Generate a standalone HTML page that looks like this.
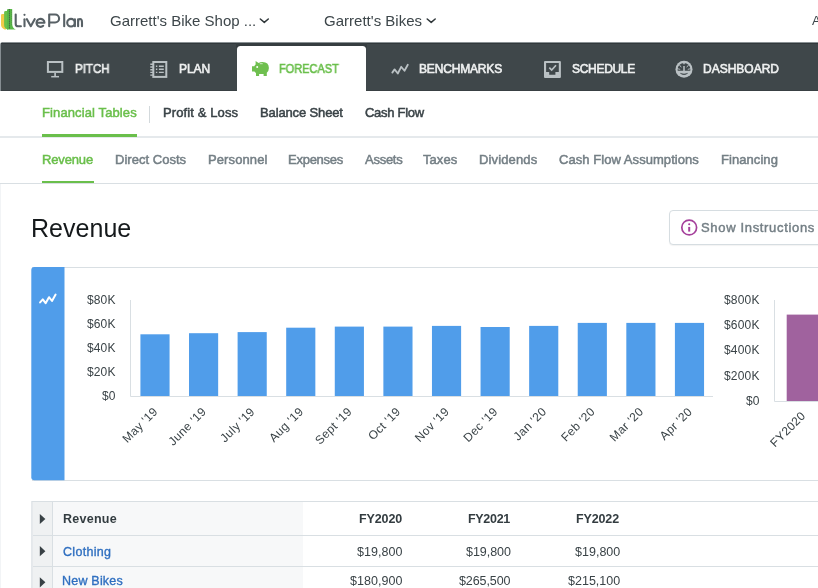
<!DOCTYPE html>
<html><head><meta charset="utf-8"><title>LivePlan - Revenue</title>
<style>
html,body{margin:0;padding:0;background:#fff;}
body{width:818px;height:588px;overflow:hidden;position:relative;font-family:"Liberation Sans",sans-serif;}
.t{position:absolute;white-space:pre;font-family:"Liberation Sans",sans-serif;will-change:transform;}
.a{position:absolute;}
svg{position:absolute;left:0;top:0;overflow:visible;}
</style></head><body>

<div class="a" style="left:0;top:42px;width:818px;height:49px;background:#868e92;border-top-left-radius:3px;overflow:hidden;"><div class="a" style="left:1px;top:0;width:817px;height:49px;background:#3f474a;border-top-left-radius:3px;"></div><div class="a" style="left:2px;top:0;width:816px;height:1px;background:#8a9194;"></div><div class="a" style="left:1px;top:1px;width:817px;height:1px;background:#31383b;"></div><div class="a" style="left:1px;top:48px;width:817px;height:1px;background:#394043;"></div><div class="a" style="left:236px;top:1px;width:131px;height:5px;background:#363d40;"></div><div class="a" style="left:236.5px;top:4.4px;width:129.5px;height:50px;background:#fff;border-radius:3.5px 3.5px 0 0;transform:translateZ(0);"></div></div>
<div class="a" style="left:0;top:136px;width:818px;height:2px;background:#e5e9ec;"></div>
<div class="a" style="left:0;top:183px;width:818px;height:1px;background:#d9dfe3;"></div>
<div class="a" style="left:42px;top:134px;width:95px;height:3px;background:#6abf4b;"></div>
<div class="a" style="left:42px;top:181px;width:52px;height:2px;background:#6abf4b;"></div>
<div class="a" style="left:149px;top:106px;width:1px;height:17px;background:#d3d9dc;"></div>
<div class="a" style="left:0;top:184px;width:1px;height:404px;background:#f2f4f6;"></div>
<div class="a" style="left:669px;top:210px;width:160px;height:33px;border:1px solid #d6dde1;border-radius:4px;box-shadow:0 1px 1px rgba(0,0,0,.05);background:#fff;"></div>
<div class="a" style="left:32px;top:267px;width:800px;height:212px;border-top:1px solid #d9dfe3;border-bottom:1px solid #d9dfe3;"></div>
<div class="a" style="left:32px;top:501px;width:800px;height:100px;border-top:1px solid #d9dfe3;"></div>
<div class="a" style="left:32px;top:502px;width:21px;height:90px;background:#eff1f2;"></div>
<div class="a" style="left:53px;top:502px;width:250px;height:90px;background:#f7f8f9;"></div>
<div class="a" style="left:52px;top:502px;width:1px;height:90px;background:#d9dfe3;"></div>
<div class="a" style="left:33px;top:535px;width:800px;height:1px;background:#d9dfe3;"></div>
<div class="a" style="left:33px;top:566px;width:800px;height:1px;background:#d9dfe3;"></div>
<svg width="818" height="588" viewBox="0 0 818 588">
<path d="M1 15.2 Q1 13.9 2.3 13.9 H6 V29.5 H4.5 Q1 27.5 1 25 Z" fill="#f2cb4a"/>
<path d="M4.1 12.4 Q4.1 11.1 5.4 11.1 H8 V29.5 H7.5 Q4.1 28 4.1 25 Z" fill="#6cc04a"/>
<path d="M7 10.2 Q7 9.1 8.2 9.1 H12.2 V24 Q12.4 28.3 15.8 29.5 H7 Z" fill="#58b947"/>
<g fill="#3b4240"><circle cx="9.5" cy="9.8" r="0.6"/><circle cx="9.5" cy="11.8" r="0.6"/><circle cx="9.5" cy="13.8" r="0.6"/><circle cx="9.5" cy="15.8" r="0.6"/><circle cx="9.5" cy="17.8" r="0.6"/><circle cx="9.5" cy="19.8" r="0.6"/><circle cx="9.5" cy="21.8" r="0.6"/><circle cx="9.5" cy="23.8" r="0.6"/><circle cx="9.5" cy="25.8" r="0.6"/><circle cx="9.5" cy="27.8" r="0.6"/></g>
<g fill="#55704d"><circle cx="11.5" cy="10.8" r="0.45"/><circle cx="11.5" cy="12.8" r="0.45"/><circle cx="11.5" cy="14.8" r="0.45"/><circle cx="11.5" cy="16.8" r="0.45"/><circle cx="11.5" cy="18.8" r="0.45"/><circle cx="11.5" cy="20.8" r="0.45"/><circle cx="11.5" cy="22.8" r="0.45"/><circle cx="11.5" cy="24.8" r="0.45"/></g>
<g fill="none" stroke="#586166" stroke-width="2.1" stroke-linecap="round" stroke-linejoin="round"><path d="M15.7 14.5 V23.9 Q15.7 26.3 18.1 26.3 H20.9"/><path d="M24.5 19.2 V26.3"/><path d="M26.9 19.2 L30.8 26.2 L34.7 19.2"/><path d="M36.5 22.8 H44.5 A4 4 0 1 0 43.2 25.8"/><path d="M49.2 26.3 V14.5 H55.1 A4 4 0 0 1 55.1 22.5 H49.2"/><path d="M64.2 14.5 V26.3"/><circle cx="71" cy="22.7" r="3.8"/><path d="M74.9 19.2 V26.3"/><path d="M78.1 19.2 V26.3 M78.1 22.4 C78.1 17.8 82 17.8 82 22.4 V26.3"/></g><circle cx="24.5" cy="14.8" r="1.1" fill="#586166"/>
<g fill="none" stroke="#30373a" stroke-width="1.5" stroke-linecap="round" stroke-linejoin="round"><path d="M260.3 19 L264.3 22.4 L268.3 19"/><path d="M427.2 19 L431.2 22.4 L435.2 19"/></g>
<g fill="none" stroke="#bac1c4"><rect x="47.9" y="62" width="14.4" height="9.9" stroke-width="2"/><path d="M55.1 73 V76" stroke-width="1.7"/><path d="M51.2 76.7 H59" stroke-width="1.5"/></g>
<g fill="none" stroke="#bac1c4"><rect x="153.3" y="62" width="13" height="14.9" stroke-width="2"/><path d="M150.3 64.3 H153 M150.3 67 H153 M150.3 69.7 H153 M150.3 72.4 H153 M150.3 75.1 H153" stroke-width="1.4"/><path d="M155.9 66.2 H157.3 M158.9 66.2 H163.8 M155.9 69.3 H157.3 M158.9 69.3 H163.8 M155.9 72.4 H157.3 M158.9 72.4 H163.8" stroke-width="1.4"/></g>
<g fill="#6fbf4f"><path d="M255.6 61 L258.6 63.1 Q260 62.1 262.5 62.1 Q268.9 62.3 268.9 68 Q268.9 71 266.8 72.8 V76 H263.6 V74.1 H259.1 V76 H256 V72.9 Q254.9 72.2 254.5 71.6 H252 V66.3 H254.3 Q254.8 65.2 255.6 64.5 Z"/></g><circle cx="257.2" cy="67.1" r="1" fill="#fff"/><path d="M259.8 63.7 H262.7" stroke="#cfeac3" stroke-width="1" fill="none"/>
<path d="M392.3 72.6 L394.6 69.4 L397.8 73.5 L401.2 66.8 L404.5 70.8 L407.8 64.7" fill="none" stroke="#bac1c4" stroke-width="1.8" stroke-linejoin="round" stroke-linecap="round"/>
<rect x="544" y="61" width="16.9" height="16.9" rx="1" fill="#bac1c4"/><path d="M546.1 63.1 H558.8 V71.9 H555.4 V74.8 H549.2 V71.9 H546.1 Z" fill="#3f474a"/><path d="M549.3 67.6 L551.7 70 L556 65.3" fill="none" stroke="#bac1c4" stroke-width="1.7"/>
<circle cx="684" cy="69.3" r="8.5" fill="#bac1c4"/><path d="M677.7 70.8 V69.3 A6.3 6.4 0 0 1 690.3 69.3 V70.8 Z" fill="#3f474a"/><path d="M684 62.5 V64.2 M684 66 V71.2" stroke="#bac1c4" stroke-width="1.5" fill="none"/><path d="M679 64.4 L681.3 67.3 M689 64.4 L686.7 67.3 M677.2 68.6 L680.2 69.4 M690.8 68.6 L687.8 69.4" stroke="#bac1c4" stroke-width="0.9" fill="none"/><path d="M680.4 73.4 Q684 75.9 687.6 73.4 Q684 74.4 680.4 73.4 Z" fill="#3f474a" stroke="#3f474a" stroke-width="0.5"/>
<circle cx="689.2" cy="227.5" r="7.4" fill="none" stroke="#a5409b" stroke-width="1.7"/><circle cx="689.2" cy="224.3" r="1.05" fill="#a5409b"/><path d="M689.2 226.9 V231.6" stroke="#a5409b" stroke-width="2" fill="none"/>
<path d="M64.5 266.9 H34.3 Q31.3 266.9 31.3 269.9 V477.2 Q31.3 480.2 34.3 480.2 H64.5 Z" fill="#509dea"/>
<rect x="31.3" y="501" width="1.1" height="90" fill="#d9dfe3"/>
<path d="M40.1 302.4 L42.8 299.4 L45.6 303.2 L49 297.2 L52 301 L55.6 294.6" fill="none" stroke="#fff" stroke-width="2" stroke-linejoin="round" stroke-linecap="round"/>
<path d="M130.5 300 V396.5 H713" fill="none" stroke="#d9dfe3" stroke-width="1"/>
<g fill="#509dea"><rect x="140.42" y="334.3" width="29.15" height="61.7"/><rect x="189.01" y="333.2" width="29.15" height="62.8"/><rect x="237.60" y="332.1" width="29.15" height="63.9"/><rect x="286.19" y="327.7" width="29.15" height="68.3"/><rect x="334.78" y="326.6" width="29.15" height="69.4"/><rect x="383.37" y="326.6" width="29.15" height="69.4"/><rect x="431.96" y="325.9" width="29.15" height="70.1"/><rect x="480.55" y="327.0" width="29.15" height="69.0"/><rect x="529.14" y="325.9" width="29.15" height="70.1"/><rect x="577.73" y="322.9" width="29.15" height="73.1"/><rect x="626.32" y="322.9" width="29.15" height="73.1"/><rect x="674.91" y="322.9" width="29.15" height="73.1"/></g>
<g font-family="Liberation Sans, sans-serif" font-size="12" fill="#3a4347" letter-spacing="0.35"><text transform="translate(158.39 412.4) rotate(-45)" text-anchor="end">May &#39;19</text><text transform="translate(206.98 412.4) rotate(-45)" text-anchor="end">June &#39;19</text><text transform="translate(255.57 412.4) rotate(-45)" text-anchor="end">July &#39;19</text><text transform="translate(304.16 412.4) rotate(-45)" text-anchor="end">Aug &#39;19</text><text transform="translate(352.75 412.4) rotate(-45)" text-anchor="end">Sept &#39;19</text><text transform="translate(401.34 412.4) rotate(-45)" text-anchor="end">Oct &#39;19</text><text transform="translate(449.94 412.4) rotate(-45)" text-anchor="end">Nov &#39;19</text><text transform="translate(498.52 412.4) rotate(-45)" text-anchor="end">Dec &#39;19</text><text transform="translate(547.12 412.4) rotate(-45)" text-anchor="end">Jan &#39;20</text><text transform="translate(595.71 412.4) rotate(-45)" text-anchor="end">Feb &#39;20</text><text transform="translate(644.30 412.4) rotate(-45)" text-anchor="end">Mar &#39;20</text><text transform="translate(692.88 412.4) rotate(-45)" text-anchor="end">Apr &#39;20</text></g>
<path d="M774.5 300 V401.5 H818" fill="none" stroke="#d9dfe3" stroke-width="1"/>
<rect x="786.7" y="314.6" width="40" height="86.4" fill="#a0629e"/>
<g font-family="Liberation Sans, sans-serif" font-size="12" fill="#3a4347" letter-spacing="0.35"><text transform="translate(806.3 416.5) rotate(-45)" text-anchor="end">FY2020</text></g>
<g fill="#384145"><path d="M39.8 513.9 L45.4 519 L39.8 524.1 Z"/><path d="M39.8 546.1 L45.4 551.2 L39.8 556.3 Z"/><path d="M39.8 577.2 L45.4 582.3 L39.8 587.4 Z"/></g>
</svg>
<span class="t" style="left:110.40px;top:13.20px;font-size:15px;line-height:15px;color:#3d464a;">Garrett's Bike Shop ...</span>
<span class="t" style="left:323.90px;top:13.20px;font-size:15px;line-height:15px;color:#3d464a;letter-spacing:0.014px;">Garrett's Bikes</span>
<span class="t" style="left:812.00px;top:13.60px;font-size:13px;line-height:13px;color:#3d464a;">Account</span>
<span class="t" style="left:74.50px;top:63.20px;font-size:12px;line-height:12px;color:#eef0f0;-webkit-text-stroke:0.6px #eef0f0;transform:scaleX(0.9611);transform-origin:0 0;">PITCH</span>
<span class="t" style="left:178.50px;top:63.20px;font-size:12px;line-height:12px;color:#eef0f0;-webkit-text-stroke:0.6px #eef0f0;letter-spacing:-0.033px;">PLAN</span>
<span class="t" style="left:279.40px;top:63.20px;font-size:12px;line-height:12px;color:#6abf4b;-webkit-text-stroke:0.6px #6abf4b;transform:scaleX(0.9152);transform-origin:0 0;">FORECAST</span>
<span class="t" style="left:419.40px;top:63.20px;font-size:12px;line-height:12px;color:#eef0f0;-webkit-text-stroke:0.6px #eef0f0;letter-spacing:-0.167px;">BENCHMARKS</span>
<span class="t" style="left:571.50px;top:63.20px;font-size:12px;line-height:12px;color:#eef0f0;-webkit-text-stroke:0.6px #eef0f0;letter-spacing:-0.3px;">SCHEDULE</span>
<span class="t" style="left:703.10px;top:63.20px;font-size:12px;line-height:12px;color:#eef0f0;-webkit-text-stroke:0.6px #eef0f0;">DASHBOARD</span>
<span class="t" style="left:42.10px;top:106.00px;font-size:13px;line-height:13px;color:#6abf4b;-webkit-text-stroke:0.5px #6abf4b;letter-spacing:0.113px;">Financial Tables</span>
<span class="t" style="left:163.10px;top:106.00px;font-size:13px;line-height:13px;color:#3a4347;-webkit-text-stroke:0.5px #3a4347;letter-spacing:0.108px;">Profit &amp; Loss</span>
<span class="t" style="left:259.60px;top:106.00px;font-size:13px;line-height:13px;color:#3a4347;-webkit-text-stroke:0.5px #3a4347;letter-spacing:-0.133px;">Balance Sheet</span>
<span class="t" style="left:364.50px;top:106.00px;font-size:13px;line-height:13px;color:#3a4347;-webkit-text-stroke:0.5px #3a4347;letter-spacing:-0.288px;">Cash Flow</span>
<span class="t" style="left:42.10px;top:152.70px;font-size:13px;line-height:13px;color:#6abf4b;-webkit-text-stroke:0.5px #6abf4b;letter-spacing:-0.15px;">Revenue</span>
<span class="t" style="left:114.70px;top:152.70px;font-size:13px;line-height:13px;color:#747f85;-webkit-text-stroke:0.5px #747f85;letter-spacing:0.027px;">Direct Costs</span>
<span class="t" style="left:207.50px;top:152.70px;font-size:13px;line-height:13px;color:#747f85;-webkit-text-stroke:0.5px #747f85;letter-spacing:0.112px;">Personnel</span>
<span class="t" style="left:288.20px;top:152.70px;font-size:13px;line-height:13px;color:#747f85;-webkit-text-stroke:0.5px #747f85;letter-spacing:-0.257px;">Expenses</span>
<span class="t" style="left:364.60px;top:152.70px;font-size:13px;line-height:13px;color:#747f85;-webkit-text-stroke:0.5px #747f85;letter-spacing:-0.26px;">Assets</span>
<span class="t" style="left:423.40px;top:152.70px;font-size:13px;line-height:13px;color:#747f85;-webkit-text-stroke:0.5px #747f85;letter-spacing:0.05px;">Taxes</span>
<span class="t" style="left:479.10px;top:152.70px;font-size:13px;line-height:13px;color:#747f85;-webkit-text-stroke:0.5px #747f85;letter-spacing:0.138px;">Dividends</span>
<span class="t" style="left:559.30px;top:152.70px;font-size:13px;line-height:13px;color:#747f85;-webkit-text-stroke:0.5px #747f85;letter-spacing:0.055px;">Cash Flow Assumptions</span>
<span class="t" style="left:721.20px;top:152.70px;font-size:13px;line-height:13px;color:#747f85;-webkit-text-stroke:0.5px #747f85;letter-spacing:0.062px;">Financing</span>
<span class="t" style="left:30.90px;top:215.70px;font-size:25px;line-height:25px;color:#15191b;letter-spacing:0.033px;">Revenue</span>
<span class="t" style="left:701.40px;top:220.70px;font-size:13px;line-height:13px;color:#747f85;-webkit-text-stroke:0.45px #747f85;letter-spacing:0.669px;">Show Instructions</span>
<span class="t" style="left:86.80px;top:294.00px;font-size:12px;line-height:12px;color:#3a4347;letter-spacing:0.133px;">$80K</span>
<span class="t" style="left:86.80px;top:318.00px;font-size:12px;line-height:12px;color:#3a4347;letter-spacing:0.133px;">$60K</span>
<span class="t" style="left:86.80px;top:342.00px;font-size:12px;line-height:12px;color:#3a4347;letter-spacing:0.133px;">$40K</span>
<span class="t" style="left:86.80px;top:366.30px;font-size:12px;line-height:12px;color:#3a4347;letter-spacing:0.133px;">$20K</span>
<span class="t" style="left:102.00px;top:390.30px;font-size:12px;line-height:12px;color:#3a4347;letter-spacing:0.2px;">$0</span>
<span class="t" style="left:723.90px;top:294.30px;font-size:12px;line-height:12px;color:#3a4347;letter-spacing:0.175px;">$800K</span>
<span class="t" style="left:723.90px;top:319.30px;font-size:12px;line-height:12px;color:#3a4347;letter-spacing:0.175px;">$600K</span>
<span class="t" style="left:723.90px;top:344.40px;font-size:12px;line-height:12px;color:#3a4347;letter-spacing:0.175px;">$400K</span>
<span class="t" style="left:723.90px;top:369.60px;font-size:12px;line-height:12px;color:#3a4347;letter-spacing:0.175px;">$200K</span>
<span class="t" style="left:746.40px;top:394.60px;font-size:12px;line-height:12px;color:#3a4347;letter-spacing:0.2px;">$0</span>
<span class="t" style="left:63.10px;top:513.40px;font-size:12.5px;line-height:12.5px;color:#333c40;font-weight:700;letter-spacing:0.267px;">Revenue</span>
<span class="t" style="left:63.20px;top:545.80px;font-size:12.5px;line-height:12.5px;color:#2f6fc0;-webkit-text-stroke:0.35px #2f6fc0;letter-spacing:0.3px;">Clothing</span>
<span class="t" style="left:62.40px;top:575.40px;font-size:12.5px;line-height:12.5px;color:#2f6fc0;-webkit-text-stroke:0.35px #2f6fc0;letter-spacing:0.212px;">New Bikes</span>
<span class="t" style="left:358.80px;top:513.40px;font-size:12.5px;line-height:12.5px;color:#333c40;font-weight:700;letter-spacing:-0.12px;">FY2020</span>
<span class="t" style="left:467.90px;top:513.40px;font-size:12.5px;line-height:12.5px;color:#333c40;font-weight:700;letter-spacing:-0.3px;">FY2021</span>
<span class="t" style="left:576.40px;top:513.40px;font-size:12.5px;line-height:12.5px;color:#333c40;font-weight:700;letter-spacing:-0.14px;">FY2022</span>
<span class="t" style="left:356.90px;top:545.70px;font-size:12.5px;line-height:12.5px;color:#3a4347;letter-spacing:0.05px;">$19,800</span>
<span class="t" style="left:465.70px;top:545.70px;font-size:12.5px;line-height:12.5px;color:#3a4347;letter-spacing:-0.05px;">$19,800</span>
<span class="t" style="left:574.60px;top:545.70px;font-size:12.5px;line-height:12.5px;color:#3a4347;letter-spacing:0.017px;">$19,800</span>
<span class="t" style="left:350.00px;top:575.40px;font-size:12.5px;line-height:12.5px;color:#3a4347;letter-spacing:0.029px;">$180,900</span>
<span class="t" style="left:459.10px;top:575.40px;font-size:12.5px;line-height:12.5px;color:#3a4347;letter-spacing:-0.1px;">$265,500</span>
<span class="t" style="left:567.60px;top:575.40px;font-size:12.5px;line-height:12.5px;color:#3a4347;letter-spacing:0.014px;">$215,100</span>
</body></html>
